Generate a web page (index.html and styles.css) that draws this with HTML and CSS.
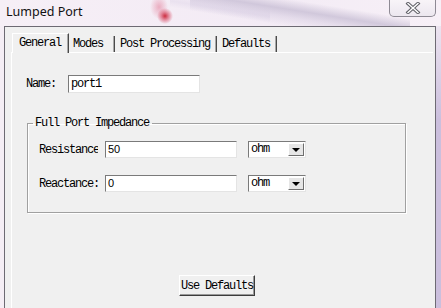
FILE: index.html
```html
<!DOCTYPE html>
<html>
<head>
<meta charset="utf-8">
<link rel="stylesheet" href="styles.css">
</head>
<body>
  <div class="titlebar">
    <span class="title">Lumped Port</span>
    <button class="close" type="button" aria-label="Close">
      <svg width="16" height="12" viewBox="0 0 16 12">
        <path d="M3 1.5 L13 10.5 M13 1.5 L3 10.5" stroke="#5f5f66" stroke-width="3.4" stroke-linecap="square" fill="none"/>
        <path d="M3 1.5 L13 10.5 M13 1.5 L3 10.5" stroke="#ffffff" stroke-width="1.4" stroke-linecap="square" fill="none"/>
      </svg>
    </button>
  </div>
  <div class="client">
    <div class="tabs">
      <div class="tab tab-active">General</div>
      <div class="tab tab-modes">Modes</div>
      <div class="tab">Post Processing</div>
      <div class="tab">Defaults</div>
    </div>
    <div class="panel">
      <div class="name-row">
        <span class="name-label">Name:</span>
        <div class="input name-input">port1</div>
      </div>
      <fieldset class="group">
        <legend class="group-title">Full Port Impedance</legend>
        <div class="row">
          <span class="row-label">Resistance:</span>
          <div class="input num-input">50</div>
          <div class="select"><span class="select-text">ohm</span><span class="drop"><span class="arrow"></span></span></div>
        </div>
        <div class="row">
          <span class="row-label">Reactance:</span>
          <div class="input num-input">0</div>
          <div class="select"><span class="select-text">ohm</span><span class="drop"><span class="arrow"></span></span></div>
        </div>
      </fieldset>
      <button class="btn" type="button">Use Defaults</button>
    </div>
  </div>
</body>
</html>
```
FILE: styles.css
```css
* { box-sizing: border-box; }

body {
  margin: 0;
  width: 441px;
  height: 308px;
  overflow: hidden;
  background:
    linear-gradient(to bottom, rgba(245,238,245,1) 0, rgba(245,238,245,0) 120px) 436px 0 / 5px 308px no-repeat,
    linear-gradient(to right, #f5eef5 436px, #cbbfdd 436px);
  font-family: "Liberation Mono", "DejaVu Sans Mono", monospace;
  font-size: 12px;
  letter-spacing: -1.2px;
  color: #000;
}

.titlebar {
  height: 26px;
  display: flex;
  justify-content: space-between;
  align-items: flex-start;
  background:
    radial-gradient(ellipse 8px 8px at 165px 16px, rgba(200,25,45,0.9), rgba(215,70,95,0.55) 50%, rgba(240,200,220,0) 100%) 0 0 / 441px 26px no-repeat,
    radial-gradient(ellipse 9px 12px at 159px 7px, rgba(225,110,140,0.5), rgba(240,200,220,0) 100%) 0 0 / 441px 26px no-repeat,
    linear-gradient(189deg, rgba(0,0,0,0) 30%, rgba(180,170,198,0.55) 47%, rgba(200,190,215,0.35) 60%, rgba(0,0,0,0) 75%) 190px 0 / 220px 26px no-repeat,
    linear-gradient(189deg, rgba(0,0,0,0) 20%, rgba(215,205,228,0.35) 40%, rgba(0,0,0,0) 55%) 170px 0 / 100px 26px no-repeat,
    linear-gradient(to right, #f6eff6, #f3ebf5 60%, #f7f0f7);
}

.title {
  font-family: "Noto Sans", "Open Sans", sans-serif;
  font-size: 12.5px;
  letter-spacing: 0;
  padding: 3px 0 0 6px;
  color: #111;
}

.close {
  width: 47px;
  height: 17px;
  margin-right: 5px;
  padding: 0;
  border: 1px solid #8e8a94;
  border-top: none;
  border-radius: 0 0 5px 5px;
  background: linear-gradient(#f8f4f8, #ece7ef);
  display: flex;
  align-items: center;
  justify-content: center;
}

.close svg { display: block; }

.client {
  margin-left: 4px;
  width: 432px;
  height: 282px;
  border: 1px solid #6d6a73;
  border-bottom: none;
  background: #f0f0f0;
  padding: 6px 2px 0 6px;
}

.tabs {
  display: flex;
  align-items: flex-end;
  height: 19px;
  padding-left: 1px;
  position: relative;
}

.tab {
  height: 16px;
  line-height: 16px;
  padding: 0 6px 0 5px;
  border-right: 1px solid #4a4a4a;
  box-shadow: inset -1px 0 0 #a8a8a8;
  white-space: nowrap;
}

.tab-modes { padding: 0 11px 0 4px; }

.tab-active {
  height: 20px;
  line-height: 18px;
  margin-bottom: -1px;
  padding: 0 7px 0 6px;
  background: #f0f0f0;
  border-top: 1px solid #fff;
  border-left: 1px solid #fff;
  position: relative;
  z-index: 1;
}

.panel {
  border-top: 1px solid #fff;
  border-left: 1px solid #fff;
  height: 260px;
}

.name-row {
  display: flex;
  align-items: center;
  margin: 22px 0 0 14px;
}

.name-label { width: 42px; }

.input {
  background: #fff;
  border: 1px solid;
  border-color: #7a7a7a #e4e4e4 #e4e4e4 #7a7a7a;
  white-space: nowrap;
  overflow: hidden;
}

.name-input {
  width: 132px;
  height: 18px;
  line-height: 17px;
  padding-left: 2px;
}

.group {
  margin: 24px 0 0 15px;
  width: 379px;
  padding: 12px 0 20px 0;
  border: 1px solid #a0a0a0;
  box-shadow: 1px 1px 0 #fff, inset 1px 1px 0 #fff;
  min-inline-size: 0;
}

.group-title {
  line-height: 12px;
  padding: 0 3px 0 2px;
  margin-left: 5px;
}

.row {
  display: flex;
  align-items: center;
  padding-left: 11px;
}

.row + .row { margin-top: 17px; }

.row-label {
  width: 59px;
  overflow: hidden;
  white-space: nowrap;
}

.num-input {
  width: 132px;
  height: 17px;
  margin-left: 7px;
  padding-left: 2px;
  font-family: "Liberation Sans", Arial, sans-serif;
  font-size: 11px;
  letter-spacing: 0;
  line-height: 15px;
}

.select {
  width: 58px;
  height: 17px;
  margin-left: 11px;
  background: #fff;
  border: 1px solid;
  border-color: #7a7a7a #e4e4e4 #e4e4e4 #7a7a7a;
  display: flex;
  justify-content: space-between;
  align-items: center;
  padding: 1px 1px 1px 2px;
}

.select-text { line-height: 13px; }

.drop {
  width: 16px;
  height: 13px;
  background: #e6e6e6;
  border: 1px solid;
  border-color: #fff #6e6e6e #6e6e6e #fff;
  display: flex;
  align-items: center;
  justify-content: center;
}

.arrow {
  width: 0;
  height: 0;
  border-left: 4px solid transparent;
  border-right: 4px solid transparent;
  border-top: 4px solid #000;
}

.btn {
  display: block;
  margin: 62px 0 0 167px;
  width: 76px;
  height: 21px;
  padding: 0;
  background: #f0f0f0;
  border: 1px solid;
  border-color: #fff #3c3c3c #3c3c3c #fff;
  box-shadow: inset -1px -1px 0 #9a9a9a;
  font-family: "Liberation Mono", "DejaVu Sans Mono", monospace;
  font-size: 12px;
  letter-spacing: -1.2px;
  color: #000;
}
```
